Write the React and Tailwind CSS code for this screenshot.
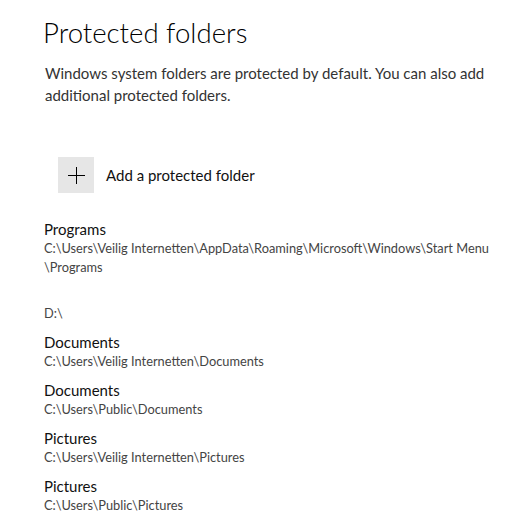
const folders = [
  { name: "Programs", path: ["C:\\Users\\Veilig Internetten\\AppData\\Roaming\\Microsoft\\Windows\\Start Menu", "\\Programs"] },
  { name: "", path: ["D:\\"] },
  { name: "Documents", path: ["C:\\Users\\Veilig Internetten\\Documents"] },
  { name: "Documents", path: ["C:\\Users\\Public\\Documents"] },
  { name: "Pictures", path: ["C:\\Users\\Veilig Internetten\\Pictures"] },
  { name: "Pictures", path: ["C:\\Users\\Public\\Pictures"] },
];

function FolderItem({ folder }) {
  return (
    <div className="flex flex-col mb-[9px]">
      {folder.name ? (
        <p className="text-[15px] leading-[20px] text-[#111]">{folder.name}</p>
      ) : (
        <div className="h-[18px]" />
      )}
      <p className="text-[12.8px] leading-[19px] text-[#444]">
        {folder.path.map((line, i) => (
          <span key={i} className="block whitespace-nowrap">{line}</span>
        ))}
      </p>
    </div>
  );
}

export default function App() {
  return (
    <div className="w-[520px] h-[522px] overflow-hidden bg-white font-['Lato',sans-serif] pl-[44px] pt-[15px]">
      <h1 className="text-[27.6px] leading-[36px] font-light text-black -ml-[1px]">Protected folders</h1>
      <p className="mt-[11px] text-[15px] leading-[22px] text-[#333] pl-[1px] w-[460px]">
        Windows system folders are protected by default. You can also add additional protected folders.
      </p>
      <button className="mt-[51px] ml-[14px] flex flex-row items-center gap-[12px]">
        <span className="w-[36px] h-[36px] bg-[#e6e6e6] flex items-center justify-center">
          <svg width="17" height="17" viewBox="0 0 17 17">
            <path d="M8.5 0v17M0 8.5h17" stroke="#000" strokeWidth="1" />
          </svg>
        </span>
        <span className="text-[15px] leading-[20px] text-[#111]">Add a protected folder</span>
      </button>
      <div className="mt-[26px] flex flex-col">
        {folders.map((f, i) => (
          <FolderItem key={i} folder={f} />
        ))}
      </div>
    </div>
  );
}
